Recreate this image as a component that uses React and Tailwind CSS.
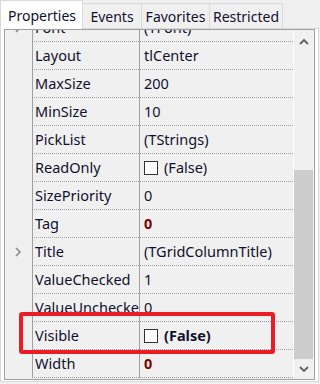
import React from 'react'

const rows = [
  { name: 'Font', value: '(TFont)', expand: true },
  { name: 'Layout', value: 'tlCenter' },
  { name: 'MaxSize', value: '200' },
  { name: 'MinSize', value: '10' },
  { name: 'PickList', value: '(TStrings)' },
  { name: 'ReadOnly', value: '(False)', check: true },
  { name: 'SizePriority', value: '0' },
  { name: 'Tag', value: '0', changed: true },
  { name: 'Title', value: '(TGridColumnTitle)', expand: true },
  { name: 'ValueChecked', value: '1' },
  { name: 'ValueUnchecked', value: '0' },
  { name: 'Visible', value: '(False)', check: true, bold: true },
  { name: 'Width', value: '0', changed: true }
]

const tabs = [
  { label: 'Events', w: 'w-[59px]' },
  { label: 'Favorites', w: 'w-[68px]' },
  { label: 'Restricted', w: 'w-[73px]' }
]

const Chevron = ({ up }) => (
  <svg width="10" height="7" viewBox="0 0 10 7" className="text-[#606060]">
    <path
      d={up ? 'M1 6 L5 2 L9 6' : 'M1 1 L5 5 L9 1'}
      fill="none"
      stroke="currentColor"
      strokeWidth="1.8"
    />
  </svg>
)

const Row = ({ row }) => (
  <div className="flex h-[28px] shrink-0">
    <div className="w-[27px] flex items-center justify-center">
      {row.expand && (
        <svg width="8" height="10" viewBox="0 0 8 10" className="ml-[-2px]">
          <path d="M2 1 L6 5 L2 9" fill="none" stroke="#8a8a8a" strokeWidth="1.6" />
        </svg>
      )}
    </div>
    <div className="w-[107px] border-l border-l-[#a0a0a0] border-b border-b-[#a0a0a0] flex items-center pl-[2px] overflow-hidden whitespace-nowrap" style={{ borderLeftStyle: 'solid', borderBottomStyle: 'dotted' }}>
      {row.name}
    </div>
    <div className="flex-1 border-l border-l-[#a0a0a0] border-b border-b-[#a0a0a0] flex items-center pl-[4px] overflow-hidden whitespace-nowrap" style={{ borderLeftStyle: 'solid', borderBottomStyle: 'dotted' }}>
      {row.check && (
        <span className="w-[14px] h-[14px] border border-[#333333] bg-white mr-[6px] shrink-0" />
      )}
      <span className={row.changed ? 'font-bold text-[#800000]' : row.bold ? 'font-bold' : ''}>
        {row.value}
      </span>
    </div>
  </div>
)

export default function App() {
  return (
    <div className="relative w-[320px] h-[384px] bg-[#f0f0f0] text-[14.5px] text-[#10102e] overflow-hidden" style={{ fontFamily: '"Noto Sans", "Open Sans", sans-serif' }}>
      {/* tabs */}
      <div className="flex items-end h-[28px] text-[14px]">
        <div className="w-[83px] h-[29px] bg-white border border-b-0 border-[#d9d9d9] flex items-center pl-[7px] relative z-10 mb-[-1px]">
          Properties
        </div>
        {tabs.map((t) => (
          <div key={t.label} className={`${t.w} h-[25px] border border-l-0 border-b-0 border-[#d9d9d9] flex items-center justify-center`}>
            {t.label}
          </div>
        ))}
      </div>

      {/* panel */}
      <div className="w-[319px] h-[354px] border border-[#d9d9d9] bg-white pl-[3px] pr-[3px] pb-[1px]">
        <div className="h-[351px] border border-[#a0a0a0] bg-[#f0f0f0] flex">
          <div className="w-[288px] overflow-hidden flex flex-col">
            <div className="mt-[-16px] flex flex-col">
              {rows.map((r) => (
                <Row key={r.name} row={r} />
              ))}
            </div>
          </div>
          <div className="flex-1 border-l border-white flex flex-col">
            <div className="h-[21px] flex items-center justify-center pt-[2px]">
              <Chevron up />
            </div>
            <div className="flex-1" />
            <div className="h-[189px] bg-[#cdcdcd] mr-[1px]" />
            <div className="h-[20px] flex items-center justify-center">
              <Chevron />
            </div>
          </div>
        </div>
      </div>

      {/* highlight */}
      <div className="absolute left-[19px] top-[312px] w-[256px] h-[42px] border-[4px] border-[#ec1c24] rounded-[3px]" />
    </div>
  )
}
